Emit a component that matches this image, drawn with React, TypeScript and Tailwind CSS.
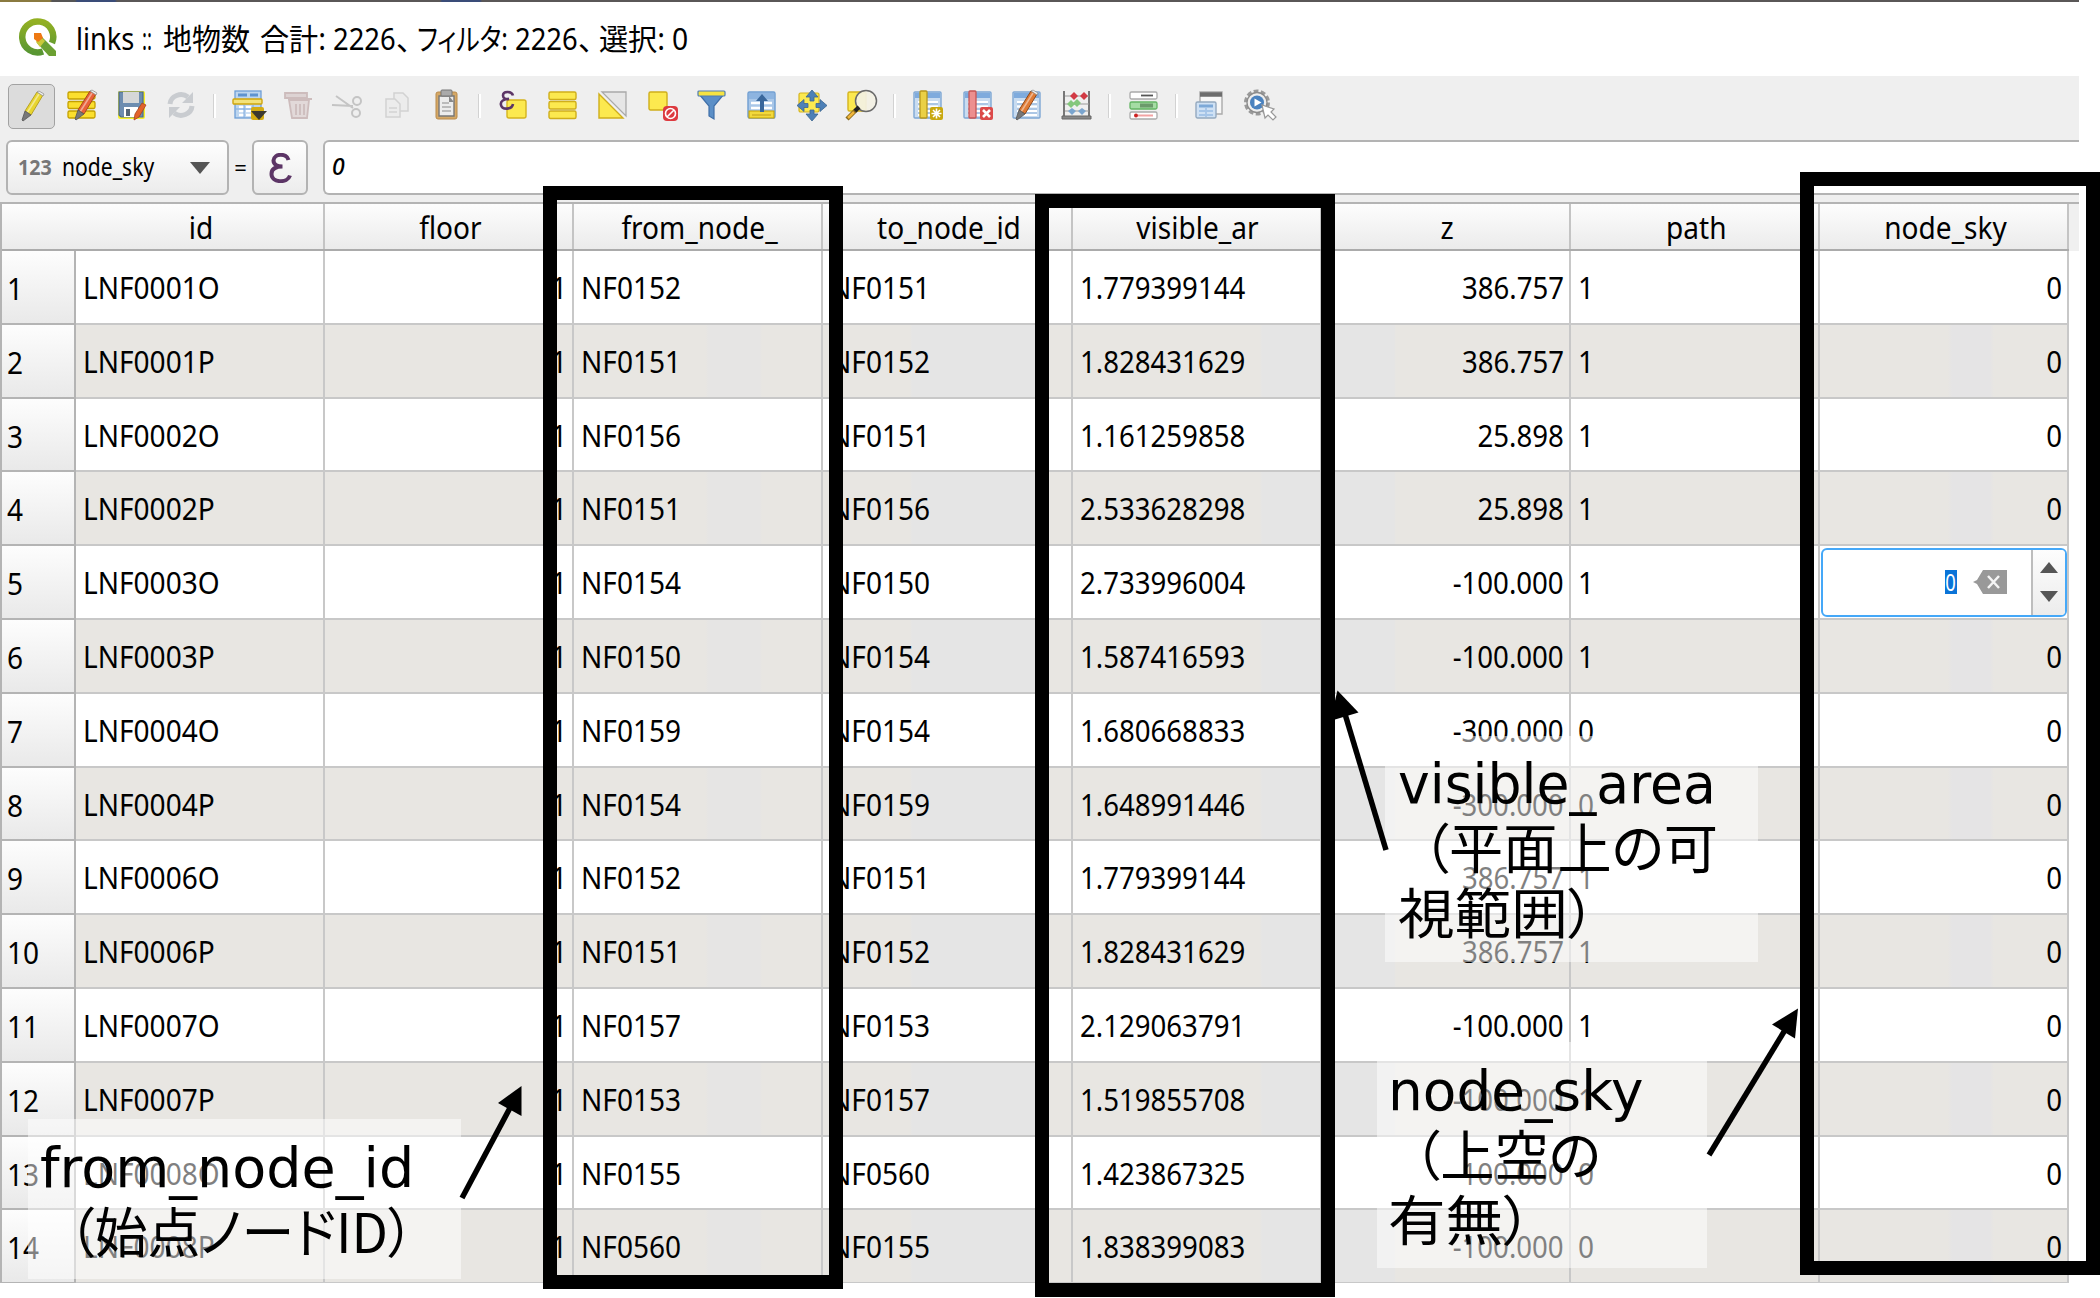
import { useLayoutEffect, useRef } from "react";
import type { ReactNode } from "react";

/* Stretches a single line of text to the width of its box. */
function Fit({ className, children }: { className: string; children: ReactNode }) {
  const box = useRef<HTMLSpanElement>(null);
  const text = useRef<HTMLSpanElement>(null);
  useLayoutEffect(() => {
    if (box.current && text.current) {
      text.current.style.transform = `scaleX(${box.current.clientWidth / text.current.offsetWidth})`;
    }
  }, []);
  return (
    <span ref={box} className={`block shrink-0 whitespace-nowrap ${className}`}>
      <span ref={text} className="inline-block origin-left">
        {children}
      </span>
    </span>
  );
}

const Y = "#fce94f";
const YD = "#c4a000";

function Svg({ children }: { children: ReactNode }) {
  return (
    <svg viewBox="0 0 30 30" className="h-[30px] w-[30px] overflow-visible" fill="none">
      {children}
    </svg>
  );
}

function Pencil({ body, edge, x = 0, s = 1 }: { body: string; edge: string; x?: number; s?: number }) {
  return (
    <g transform={`translate(${x} 0) scale(${s})`}>
      <path d="M20 1l6 3L14 24l-6-4z" fill={body} stroke={edge} strokeWidth="1" />
      <path d="M22 3L10 22" stroke="#fff" strokeOpacity=".45" strokeWidth="1.6" />
      <path d="M20 1l2-1 5 3-1 2z" fill="#eee" stroke="#888" strokeWidth=".7" />
      <path d="M8 20l6 4-8 6-1-1z" fill="#777" stroke="#555" strokeWidth=".8" />
    </g>
  );
}

function Bars() {
  return (
    <g fill="#fbdf2e" stroke={YD} strokeWidth="1.3">
      <rect x="1" y="2" width="27" height="7" rx="1.5" />
      <rect x="1" y="11.5" width="27" height="7" rx="1.5" />
      <rect x="1" y="21" width="27" height="7" rx="1.5" />
    </g>
  );
}

function TableSheet() {
  return (
    <g>
      <rect x="1" y="2" width="27" height="26" rx="1" fill="#c9dcf0" stroke="#7ea7d4" strokeWidth="1.4" />
      <rect x="2" y="3" width="25" height="5" fill="#7fabdd" />
      <path d="M5 12h20M5 16.5h20M5 21h20M5 25h20" stroke="#fff" strokeWidth="2" />
      <path d="M5 14h20M5 19h20M5 23h20" stroke="#8fb2da" strokeWidth="1" />
    </g>
  );
}

const icons: Record<string, ReactNode> = {
  edit: <Pencil body="#e8d530" edge="#b8a226" />,
  multi: (
    <>
      <Bars />
      <Pencil body="#e8603a" edge="#a64a1c" x={3} />
    </>
  ),
  save: (
    <>
      <rect x="1" y="1" width="27" height="28" rx="2" fill="#f7ef2a" />
      <path d="M2 2h24v25H4l-2-2z" fill="#6d8db0" stroke="#4a6a8c" strokeWidth="1.2" />
      <rect x="6" y="2" width="16" height="11" fill="#d5d7d8" />
      <rect x="7" y="17" width="14" height="10" fill="#fff" />
      <rect x="9" y="19" width="4" height="7" fill="#567" />
      <path d="M25 13l4 2-7 12-5 3 1-6z" fill="#e2622b" stroke="#a8441c" strokeWidth=".8" />
    </>
  ),
  reload: (
    <g stroke="#c9ccd0" strokeWidth="5">
      <path d="M4 14a11 10 0 0 1 18-7" />
      <path d="M26 16a11 10 0 0 1-18 7" />
      <path d="M27 2v11H16zM3 28V17h11z" fill="#c9ccd0" stroke="none" />
    </g>
  ),
  addrow: (
    <>
      <rect x="2" y="1" width="26" height="27" fill="#bcd5ef" stroke="#6d9ed6" strokeWidth="1.3" />
      <path d="M5 5h9M17 5h8" stroke="#5e93cf" strokeWidth="3" />
      <path d="M6 17h5M13 17h5M6 21h5M13 21h5M6 25h5M13 25h5" stroke="#fff" strokeWidth="2.4" />
      <rect x="0" y="9" width="29" height="5" rx="1" fill="#f3e27b" stroke="#d0a50d" strokeWidth="1.4" />
      <path d="M11 15v13M20 15v5M3 19h17" stroke="#7eaade" strokeWidth="1" />
      <rect x="18" y="17" width="13" height="13" rx="2" fill="#d4ac12" />
      <path d="M18 21h16l-8 9z" fill="#3c3a30" />
    </>
  ),
  trash: (
    <g stroke="#cdbcbc" strokeWidth="1.8">
      <path d="M2 3h22v5H2z" fill="#ddd3d3" />
      <path d="M6 10h20l-2 18H9z" fill="#e2d9d9" />
      <path d="M13 14v11M17 14v11M21 14v11M5 9h24" />
    </g>
  ),
  cut: (
    <g stroke="#c4c4c4" strokeWidth="2">
      <path d="M0 15l21 1M4 6l17 12" />
      <circle cx="25" cy="11" r="4" />
      <circle cx="24" cy="23" r="4" />
    </g>
  ),
  copy: (
    <g stroke="#d2d2d2" strokeWidth="1.5" fill="#ececec">
      <path d="M12 3h9l5 5v13H12z" />
      <path d="M4 9h9l5 5v13H4z" />
      <path d="M7 18h8M7 22h8" />
    </g>
  ),
  paste: (
    <>
      <rect x="4" y="2" width="21" height="27" rx="2" fill="#d5a866" stroke="#b98a4a" strokeWidth="1" />
      <path d="M7 6h15v20H7z" fill="#ececec" stroke="#777" strokeWidth="1.4" />
      <rect x="9" y="0" width="11" height="6" rx="1" fill="#aaa" stroke="#777" />
      <path d="M10 13h7M10 17h9M10 21h9" stroke="#aaa" strokeWidth="1.6" />
      <path d="M17 6l5 6h-5z" fill="#888" />
    </>
  ),
  selexpr: (
    <>
      <rect x="8" y="10" width="19" height="18" rx="2" fill={Y} stroke="#d5b41e" strokeWidth="1.4" />
      <path d="M14 5.500C12.500 .5 4 1 4 5.500c0 3 3 4 6 3.500-5 0-9 2-8 6 1 5 11 5 12-1" stroke="#5c3566" strokeWidth="2.600" />
    </>
  ),
  selall: (
    <g fill={Y} stroke="#cfae1b" strokeWidth="1.4">
      <rect x="1" y="2" width="27" height="7.500" rx="1.500" />
      <rect x="1" y="11.500" width="27" height="7.500" rx="1.500" />
      <rect x="1" y="21" width="27" height="7.500" rx="1.500" />
    </g>
  ),
  invert: (
    <>
      <path d="M4 2h24v24z" fill="#e6e6e6" stroke="#a9a9a9" strokeWidth="1.3" />
      <path d="M1 4l24 24H1z" fill={Y} stroke="#cfae1b" strokeWidth="1.4" />
    </>
  ),
  desel: (
    <>
      <rect x="1" y="2" width="18" height="18" rx="1.500" fill={Y} stroke="#cfae1b" strokeWidth="1.4" />
      <rect x="15" y="16" width="15" height="15" rx="4" fill="#dd3a3f" />
      <circle cx="22.500" cy="23.500" r="5" stroke="#fff" strokeWidth="1.600" />
      <path d="M19 27l7-7" stroke="#fff" strokeWidth="1.600" />
    </>
  ),
  filter: (
    <>
      <path d="M2 4l10 12v10l5 3V16L27 4z" fill="#5b8fc7" stroke="#3f6fa8" strokeWidth="1.200" />
      <rect x="1" y="1" width="27" height="5" rx="1" fill="#f5e342" stroke="#4f7db1" strokeWidth="1.200" />
    </>
  ),
  totop: (
    <>
      <rect x="1" y="2" width="27" height="26" rx="1.500" fill="#a9c7e8" stroke="#6f9ed2" strokeWidth="1.400" />
      <rect x="2" y="3" width="25" height="6" fill="#8db4e0" />
      <path d="M4 13h21M4 18h21" stroke="#fff" strokeWidth="2.400" />
      <rect x="2" y="21" width="25" height="7" fill="#f2d93c" stroke="#c4a000" strokeWidth="1" />
      <path d="M5 25h19" stroke="#d9bb2a" strokeWidth="2" />
      <path d="M15 4l6 7h-4v11h-4V11H9z" fill="#39679c" />
    </>
  ),
  pan: (
    <>
      <rect x="2" y="3" width="20" height="19" rx="1.500" fill={Y} stroke="#d5b41e" strokeWidth="1.200" />
      <path
        d="M15 0l6 7h-4v4h-4V7H9zM15 31l6-7h-4v-4h-4v4H9zM0 15.500l7-6v4h4v4H7v4zM30 15.500l-7-6v4h-4v4h4v4z"
        fill="#4d80b7"
        stroke="#3a648f"
        strokeWidth=".8"
      />
    </>
  ),
  zoom: (
    <>
      <rect x="2" y="2" width="18" height="19" rx="1.500" fill={Y} stroke="#d5b41e" strokeWidth="1.400" />
      <path d="M10 20L1 29" stroke="#8a6b1c" strokeWidth="4.500" />
      <path d="M8 22L2 28" stroke="#f0b63c" strokeWidth="2.500" />
      <circle cx="20" cy="11" r="10.500" fill="#f3f1e4" fillOpacity=".93" stroke="#6a6a6a" strokeWidth="1.500" />
      <path d="M13 17l-4 4" stroke="#222" strokeWidth="4" />
    </>
  ),
  newcol: (
    <>
      <TableSheet />
      <rect x="7" y="1" width="7" height="27" rx="1" fill="#ead046" stroke="#b9971a" strokeWidth="1.300" />
      <rect x="17" y="17" width="13" height="13" rx="2" fill="#c9a80e" />
      <path d="M23.500 18.500v10M18.500 23.500h10M20 20l7 7M27 20l-7 7" stroke="#fff" strokeWidth="1.600" />
    </>
  ),
  delcol: (
    <>
      <TableSheet />
      <rect x="6" y="1" width="7" height="27" rx="1" fill="#ec8f8f" stroke="#c65454" strokeWidth="1.300" />
      <rect x="17" y="17" width="13" height="13" rx="2" fill="#dc4a4a" />
      <path d="M20 20l7 7M27 20l-7 7" stroke="#fff" strokeWidth="2.600" />
    </>
  ),
  editcol: (
    <>
      <TableSheet />
      <Pencil body="#e07a34" edge="#8d4a1c" x={-1} />
    </>
  ),
  calc: (
    <>
      <path d="M2 1v27M27 1v27" stroke="#777" strokeWidth="2" />
      <path d="M3 6h24M3 14h24M3 21h24" stroke="#999" strokeWidth="1.200" />
      <path d="M8 6l4-4 4 4-4 4zM18 6l4-4 4 4-4 4z" fill="#d23a44" />
      <path d="M5 14l4-4 4 4-4 4zM11 13l4-4 4 4-4 4z" fill="#84c77c" />
      <path d="M6 21l4-3 4 3-4 4zM16 21l4-3 4 3-4 4z" fill="#7aa5cf" />
      <path d="M0 26h29v3H0z" fill="#888" stroke="#666" />
    </>
  ),
  cond: (
    <>
      <rect x="1" y="2" width="27" height="7" rx="1.500" fill="#fff" stroke="#aaa" strokeWidth="1.300" />
      <path d="M12 5.500h12" stroke="#555" strokeWidth="1.800" />
      <rect x="1" y="12" width="27" height="7" rx="1.500" fill="#a5dca4" stroke="#63b463" strokeWidth="1.300" />
      <path d="M11 15.500h13" stroke="#6b9a6b" strokeWidth="4" />
      <rect x="1" y="22" width="27" height="7" rx="1.500" fill="#fff" stroke="#aaa" strokeWidth="1.300" />
      <path d="M9 25.500h15" stroke="#f2a3a3" strokeWidth="2" />
      <circle cx="7" cy="25.500" r="2" fill="#c22" />
    </>
  ),
  dock: (
    <>
      <path d="M5 2h22v22H5z" fill="#f7f7f7" stroke="#aaa" strokeWidth="1.400" />
      <path d="M5 4.500h22" stroke="#6d6d6d" strokeWidth="4.500" />
      <rect x="1" y="12" width="20" height="16" rx="1.500" fill="#cfe1f4" stroke="#94a9bf" strokeWidth="1.400" />
      <path d="M4 16h14" stroke="#7da9d8" strokeWidth="3" />
      <path d="M4 21h14M4 25h14M11 18v9" stroke="#a5c5e8" strokeWidth="1.800" />
    </>
  ),
  action: (
    <>
      <circle cx="12" cy="12.500" r="11" stroke="#9a9a9a" strokeWidth="4" strokeDasharray="4.600 2.300" />
      <circle cx="12" cy="12.500" r="10" fill="#eee" stroke="#8c8c8c" strokeWidth="1.300" />
      <circle cx="12" cy="12.500" r="7" fill="#4a82bf" />
      <path d="M9.500 8.500l7 4-7 4z" fill="#fff" />
      <path d="M17 15l3 13 3-3 5 5 3-3-5-5 3-3z" fill="#fff" stroke="#999" strokeWidth="1.200" />
    </>
  ),
};

const toolbar: string[] = [
  "edit", "multi", "save", "reload", "|",
  "addrow", "trash", "cut", "copy", "paste", "|",
  "selexpr", "selall", "invert", "desel", "filter", "totop", "pan", "zoom", "|",
  "newcol", "delcol", "editcol", "calc", "|",
  "cond", "|",
  "dock", "action",
];

const columns = ["id", "floor", "from_node_", "to_node_id", "visible_ar", "z", "path", "node_sky"];

const rows: string[][] = [
  ["LNF0001O", "1", "NF0152", "NF0151", "1.779399144", "386.757", "1", "0"],
  ["LNF0001P", "1", "NF0151", "NF0152", "1.828431629", "386.757", "1", "0"],
  ["LNF0002O", "1", "NF0156", "NF0151", "1.161259858", "25.898", "1", "0"],
  ["LNF0002P", "1", "NF0151", "NF0156", "2.533628298", "25.898", "1", "0"],
  ["LNF0003O", "1", "NF0154", "NF0150", "2.733996004", "-100.000", "1", "0"],
  ["LNF0003P", "1", "NF0150", "NF0154", "1.587416593", "-100.000", "1", "0"],
  ["LNF0004O", "1", "NF0159", "NF0154", "1.680668833", "-300.000", "0", "0"],
  ["LNF0004P", "1", "NF0154", "NF0159", "1.648991446", "-300.000", "0", "0"],
  ["LNF0006O", "1", "NF0152", "NF0151", "1.779399144", "386.757", "1", "0"],
  ["LNF0006P", "1", "NF0151", "NF0152", "1.828431629", "386.757", "1", "0"],
  ["LNF0007O", "1", "NF0157", "NF0153", "2.129063791", "-100.000", "1", "0"],
  ["LNF0007P", "1", "NF0153", "NF0157", "1.519855708", "-100.000", "1", "0"],
  ["LNF0008O", "1", "NF0155", "NF0560", "1.423867325", "-100.000", "0", "0"],
  ["LNF0008P", "1", "NF0560", "NF0155", "1.838399083", "-100.000", "0", "0"],
];

const rightAligned = [1, 5, 7];
const EDITED_ROW = 4;

function SpinBox() {
  return (
    <div className="mt-[1.500px] ml-[1px] flex h-[69px] w-[246px] overflow-hidden rounded-[6px] border-2 border-[#45a8f8] bg-white">
      <div className="flex flex-1 items-center justify-end gap-[16px] pr-[24px]">
        <span className="flex h-[24px] w-[12px] items-center justify-center bg-[#0a74d8] text-[23px] leading-none text-white">
          <span className="scale-x-[0.8]">0</span>
        </span>
        <svg viewBox="0 0 34 24" className="h-[24px] w-[34px]">
          <path d="M0 12l4-2 6-10h24v24H10L4 14z" fill="#999" />
          <path d="M15 6l11 12M26 6L15 18" stroke="#f4f4f4" strokeWidth="2.500" />
        </svg>
      </div>
      <div className="flex w-[34px] flex-col items-center justify-center gap-[18px] border-l-2 border-[#bdbdbd] bg-linear-to-b from-[#fdfdfd] to-[#ececec]">
        <svg viewBox="0 0 18 11" className="h-[11px] w-[18px]">
          <path d="M9 0l9 11H0z" fill="#555" />
        </svg>
        <svg viewBox="0 0 18 11" className="h-[11px] w-[18px]">
          <path d="M0 0h18L9 11z" fill="#555" />
        </svg>
      </div>
    </div>
  );
}

function AttributeTable() {
  return (
    <div className="h-[1079px] overflow-hidden border-l-2 border-[#b4b4b4] text-[30px] leading-[40px]">
      <div className="flex h-[47.500px] w-[2077px] bg-[#f0f0f0]">
        <div className="flex w-[2067px] border-b-[2.500px] border-[#ababab] bg-linear-to-b from-[#fdfdfd] to-[#ebebeb]">
          <div className="w-[74px] shrink-0" />
          {columns.map((c) => (
            <div
              key={c}
              className="flex w-[249.150px] shrink-0 items-center justify-center border-r-2 border-[#c4c4c4] pt-[4px] pl-[3px]"
            >
              <span className="inline-block scale-x-[0.935]">{c}</span>
            </div>
          ))}
        </div>
      </div>
      {rows.map((r, i) => (
        <div key={r[0]} className="flex h-[73.800px]">
          <div className="w-[74px] shrink-0 border-r-2 border-b-2 border-[#b4b4b4] bg-linear-to-b from-[#fdfdfd] to-[#e9e9e9] pt-[18px] pl-[5px]">
            <span className="inline-block origin-left scale-x-[0.935]">{i + 1}</span>
          </div>
          <div
            className={
              i % 2
                ? "flex bg-[linear-gradient(90deg,#e8e6e2_630px,#e6e5e4_632px,#e6e5e4_684px,#e8e6e2_686px,#e8e6e2_834px,#e5e5e5_836px,#e5e5e5_960px,#e8e6e2_962px,#e8e6e2_1184px,#e5e5e5_1186px,#e5e5e5_1318px,#e8e6e2_1320px,#e8e6e2_1872px,#e5e4e5_1876px,#e5e4e5_1914px,#e8e6e2_1918px)]"
                : "flex bg-white"
            }
          >
            {r.map((v, c) => (
              <div
                key={columns[c]}
                className={`w-[249.150px] shrink-0 border-r-2 border-b-2 border-[#c8c8c8] ${
                  i === EDITED_ROW && c === 7
                    ? ""
                    : rightAligned.includes(c)
                      ? "pt-[17px] pr-[5px] text-right"
                      : "pt-[17px] pl-[7px]"
                }`}
              >
                {i === EDITED_ROW && c === 7 ? (
                  <SpinBox />
                ) : (
                  <span
                    className={
                      c === 4
                        ? "inline-block origin-left scale-x-[0.92]"
                        : rightAligned.includes(c)
                          ? "inline-block origin-right scale-x-[0.92]"
                          : "inline-block origin-left scale-x-[0.935]"
                    }
                  >
                    {v}
                  </span>
                )}
              </div>
            ))}
          </div>
        </div>
      ))}
    </div>
  );
}

const latin = "font-['DejaVu_Sans',sans-serif] text-[56px] leading-[65px]";
const kanji =
  "relative -top-[3px] font-['Noto_Sans_CJK_JP',sans-serif] text-[54px] leading-[65px] font-normal [font-feature-settings:'palt']";

export default function App() {
  return (
    <div className="relative h-[1298px] w-[2100px] overflow-hidden bg-white font-['Noto_Sans','Noto_Sans_CJK_JP',sans-serif] text-black">
      <div className="flex w-[2079px] flex-col">
        <div className="h-[2px] bg-[linear-gradient(90deg,#8a7a40_50px,#555_52px,#555_75px,#3a4c78_77px,#3a4c78_115px,#5a5757_117px,#5a5757_440px,#3a4c78_442px,#3a4c78_480px,#5a5757_482px)]" />

        <header className="flex h-[74px] items-center text-[30px] leading-[40px]">
          <svg viewBox="0 0 40 40" className="mb-[2px] ml-[18px] h-[40px] w-[40px] shrink-0">
            <defs>
              <linearGradient id="ring" x1="0" y1="0" x2="0" y2="1">
                <stop offset="0" stopColor="#93b023" />
                <stop offset="1" stopColor="#589632" />
              </linearGradient>
            </defs>
            <path d="M25 33.500A15.500 15.500 0 1 1 34 25" fill="none" stroke="url(#ring)" strokeWidth="6.500" />
            <path d="M22 17l16 16v5h-7L19 25z" fill="#6ca032" />
            <path d="M21 17l6 6-5 6-4-5z" fill="#c9c83a" />
            <path d="M16 15h7l2 5-5 4-4-3z" fill="#ee7913" />
          </svg>
          <div className="ml-[18px] flex">
            <Fit className="w-[58px]">links</Fit>
            <Fit className="ml-[8px] w-[10px]">::</Fit>
            <Fit className="ml-[11px] w-[87px]">地物数</Fit>
            <Fit className="ml-[10px] w-[66px]">合計:</Fit>
            <Fit className="ml-[7px] w-[63px]">2226</Fit>
            <span className="w-[21px] shrink-0">、</span>
            <Fit className="w-[91px] [font-feature-settings:'palt']">フィルタ:</Fit>
            <Fit className="ml-[7px] w-[63px]">2226</Fit>
            <span className="w-[21px] shrink-0">、</span>
            <Fit className="w-[66px]">選択:</Fit>
            <Fit className="ml-[7px] w-[16px]">0</Fit>
          </div>
        </header>

        <div className="flex h-[60px] bg-[#efefef] pl-[7px]">
          {toolbar.map((name, i) =>
            name === "|" ? (
              <div key={i} className="flex w-[17px] shrink-0 justify-center pt-[18px]">
                <div className="h-[24px] w-[3px] border-l border-[#d2d2d2] bg-white" />
              </div>
            ) : (
              <div key={i} className="flex w-[49.700px] shrink-0 justify-center pt-[8px]">
                <div
                  className={
                    name === "edit"
                      ? "flex h-[45px] w-[47px] items-center justify-center rounded-[5px] border-[1.500px] border-[#a2a2a2] bg-[#dcdcdc] pb-[2px]"
                      : "flex h-[45px] w-[47px] items-center justify-center pb-[3px] pl-[1px]"
                  }
                >
                  <Svg>{icons[name]}</Svg>
                </div>
              </div>
            ),
          )}
        </div>

        <div className="flex h-[65.500px] bg-[#efefef] pt-[4px]">
          <div className="ml-[6px] flex h-[55px] w-[223px] shrink-0 items-center rounded-[6px] border-2 border-[#b3b3b3] bg-linear-to-b from-[#fefefe] to-[#ececec]">
            <Fit className="ml-[10px] w-[34px] pb-[2px] text-[22px] font-bold text-[#777]">123</Fit>
            <Fit className="ml-[10px] w-[92px] pb-[2px] text-[25px]">node_sky</Fit>
            <svg viewBox="0 0 20 12" className="ml-[36px] h-[12px] w-[20px]">
              <path d="M0 0h20L10 12z" fill="#555" />
            </svg>
          </div>
          <div className="flex w-[23px] shrink-0 items-center justify-center pb-[6px] text-[22px]">=</div>
          <div className="flex h-[55px] w-[56px] shrink-0 items-center justify-center rounded-[6px] border-2 border-[#b3b3b3] bg-linear-to-b from-[#fefefe] to-[#ececec]">
            <svg viewBox="0 0 24 30" className="h-[30px] w-[24px]" fill="none" stroke="#5c3566">
              <path
                d="M20.500 7C19 0 6 0 5.500 7.500c0 4 4 6 9 6-6 0-11 2-11 7.500 0 9 16 9.500 18.500 1.500"
                strokeWidth="4"
              />
            </svg>
          </div>
          <div className="ml-[15px] flex h-[55px] flex-1 items-center rounded-l-[6px] border-2 border-r-0 border-[#b3b3b3] bg-white pl-[7px]">
            <Fit className="w-[13px] pb-[2px] text-[23px] font-medium italic">0</Fit>
          </div>
        </div>

        <div className="h-[2px] bg-[#b4b4b4]" />
        <AttributeTable />
      </div>

      <div className="absolute top-[186px] left-[543px] h-[1103px] w-[300px] border-[14px] border-black" />
      <div className="absolute top-[194px] left-[1035px] h-[1103px] w-[300px] border-[14px] border-black" />
      <div className="absolute top-[172px] left-[1800px] h-[1103px] w-[300px] border-[14px] border-black" />

      <div className="absolute top-[1119px] left-[28px] flex h-[160px] w-[433px] flex-col bg-white/50 pt-[16px] pl-[12px]">
        <Fit className={`w-[374px] ${latin}`}>from_node_id</Fit>
        <Fit className={`ml-[28px] w-[346px] ${kanji}`}>（始点ノードID）</Fit>
      </div>
      <div className="absolute top-[736px] left-[1385px] flex h-[226px] w-[373px] flex-col bg-white/50 pt-[15px] pl-[13px]">
        <Fit className={`w-[318px] ${latin}`}>visible_area</Fit>
        <Fit className={`ml-[24px] w-[296px] ${kanji}`}>（平面上の可</Fit>
        <Fit className={`w-[198px] ${kanji}`}>視範囲）</Fit>
      </div>
      <div className="absolute top-[1042px] left-[1377px] flex h-[226px] w-[330px] flex-col bg-white/50 pt-[16px] pl-[11px]">
        <Fit className={`w-[256px] ${latin}`}>node_sky</Fit>
        <Fit className={`ml-[25px] w-[188px] ${kanji}`}>（上空の</Fit>
        <Fit className={`w-[144px] ${kanji}`}>有無）</Fit>
      </div>

      <svg viewBox="0 0 2100 1298" className="absolute inset-0 h-[1298px] w-[2100px]">
        <g stroke="#000" strokeWidth="5.500">
          <path d="M462 1198L511 1106" />
          <path d="M1386 850L1345 714" />
          <path d="M1709 1155L1785 1030" />
        </g>
        <path d="M521.500 1086V1116L498 1103z" />
        <path d="M1337.500 690.500L1358.500 712.500L1330 721z" />
        <path d="M1798 1008.500L1795 1038.500L1772 1024.500z" />
      </svg>
    </div>
  );
}
